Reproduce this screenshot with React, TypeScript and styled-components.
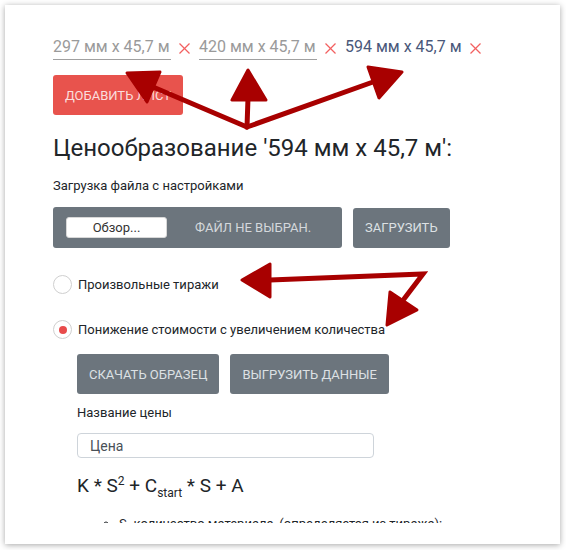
import React from 'react'
import styled, { createGlobalStyle } from 'styled-components'

const GlobalStyle = createGlobalStyle`
  html, body {
    margin: 0;
    padding: 0;
    background: #fff;
    font-family: Roboto, "Liberation Sans", Arial, sans-serif;
  }
  * { box-sizing: border-box; }
`

const sheets = [
  { label: '297 мм x 45,7 м', active: false },
  { label: '420 мм x 45,7 м', active: false },
  { label: '594 мм x 45,7 м', active: true },
]

const App = () => {
  return (
    <Page>
      <GlobalStyle />
      <Card>
        <Content>
          <SheetRow>
            {sheets.map((s) => (
              <React.Fragment key={s.label}>
                <SheetField $active={s.active}>{s.label}</SheetField>
                <RemoveMark viewBox="0 0 11 11">
                  <line x1="0.5" y1="0.5" x2="10.5" y2="10.5" />
                  <line x1="10.5" y1="0.5" x2="0.5" y2="10.5" />
                </RemoveMark>
              </React.Fragment>
            ))}
          </SheetRow>
          <AddButton>Добавить лист</AddButton>

          <Heading>Ценообразование '594 мм x 45,7 м':</Heading>

          <Label>Загрузка файла с настройками</Label>
          <UploadRow>
            <FilePicker>
              <BrowseButton>Обзор...</BrowseButton>
              <FileName>Файл не выбран.</FileName>
            </FilePicker>
            <GrayButton>Загрузить</GrayButton>
          </UploadRow>

          <RadioGroup>
            <RadioRow>
              <RadioCircle $checked={false} />
              <RadioLabel>Произвольные тиражи</RadioLabel>
            </RadioRow>
            <RadioRow>
              <RadioCircle $checked={true} />
              <RadioLabel>Понижение стоимости с увеличением количества</RadioLabel>
            </RadioRow>
          </RadioGroup>

          <Indented>
            <ButtonRow>
              <GrayButton>Скачать образец</GrayButton>
              <GrayButton>Выгрузить данные</GrayButton>
            </ButtonRow>
            <PriceLabel>Название цены</PriceLabel>
            <PriceInput defaultValue="Цена" />
            <Formula>
              K * S<sup>2</sup> + C<sub>start</sub> * S + A
            </Formula>
            <Notes>
              <li>S- количество материала, (определяется из тиража):</li>
            </Notes>
          </Indented>
        </Content>
      </Card>

      <Arrows viewBox="0 0 566 550">
        <g stroke="#a80000" strokeWidth="5" strokeLinecap="round" fill="none">
          <line x1="247" y1="127" x2="153" y2="87" />
          <line x1="247" y1="127" x2="248" y2="98" />
          <line x1="247" y1="127" x2="373" y2="82" />
          <polyline points="270,280 423,274 404,299" />
        </g>
        <g fill="#a80000" stroke="#a80000" strokeWidth="3" strokeLinejoin="round">
          <polygon points="127,73 160,72 147,102" />
          <polygon points="248,70 232,100 266,100" />
          <polygon points="368,67 402,72 379,98" />
          <polygon points="242,280 270,264 270,297" />
          <polygon points="390,292 417,310 387,325" />
        </g>
      </Arrows>
    </Page>
  )
}

export default App

const Page = styled.div`
  position: relative;
  width: 566px;
  height: 550px;
  padding: 5px 6px 6px 5px;
`
const Card = styled.div`
  width: 555px;
  height: 539px;
  background: #fff;
  box-shadow: 0 1px 6px rgba(0, 0, 0, 0.35);
  display: flex;
  flex-direction: column;
  padding-bottom: 21px;
`
const Content = styled.div`
  flex: 1;
  overflow: hidden;
  padding: 31px 0 0 48px;
  color: #212529;
`
const SheetRow = styled.div`
  display: flex;
  align-items: center;
`
const SheetField = styled.div<{ $active: boolean }>`
  width: ${(p) => (p.$active ? 'auto' : '118px')};
  font-size: 16px;
  line-height: 22px;
  padding-bottom: 1px;
  color: ${(p) => (p.$active ? '#4a587a' : '#9a9a9a')};
  border-bottom: 1px solid ${(p) => (p.$active ? 'transparent' : '#a0a0a0')};
  white-space: nowrap;
`
const RemoveMark = styled.svg`
  width: 11px;
  height: 11px;
  margin: 0 9px 0 8px;
  stroke: #f26060;
  stroke-width: 1.2;
`
const AddButton = styled.button`
  display: block;
  margin-top: 15px;
  width: 130px;
  height: 40px;
  border: none;
  border-radius: 3px;
  background: #e8534d;
  color: rgba(255, 255, 255, 0.82);
  font-family: inherit;
  font-size: 13px;
  text-transform: uppercase;
`
const Heading = styled.h2`
  margin: 19px 0 0;
  font-size: 24px;
  font-weight: 400;
  line-height: 28px;
  color: #212529;
`
const Label = styled.div`
  margin-top: 15px;
  font-size: 13px;
  line-height: 18px;
`
const UploadRow = styled.div`
  margin-top: 12px;
  display: flex;
  gap: 11px;
  align-items: center;
`
const FilePicker = styled.div`
  width: 289px;
  height: 41px;
  background: #6c757d;
  border-radius: 3px;
  display: flex;
  align-items: center;
  padding-left: 13px;
`
const BrowseButton = styled.div`
  width: 101px;
  height: 21px;
  background: #fff;
  border: 1px solid #d8d8d8;
  border-radius: 3px;
  font-size: 13px;
  line-height: 19px;
  text-align: center;
  color: #333;
`
const FileName = styled.div`
  margin-left: 28px;
  font-size: 13px;
  text-transform: uppercase;
  color: #d4d8dc;
`
const GrayButton = styled.button`
  height: 40px;
  padding: 0 12px;
  border: none;
  border-radius: 3px;
  background: #6c757d;
  color: #dde1e4;
  font-family: inherit;
  font-size: 13px;
  text-transform: uppercase;
`
const RadioGroup = styled.div`
  margin-top: 27px;
  display: flex;
  flex-direction: column;
  gap: 26px;
`
const RadioRow = styled.label`
  display: flex;
  align-items: center;
  gap: 6px;
`
const RadioCircle = styled.span<{ $checked: boolean }>`
  width: 19px;
  height: 19px;
  border-radius: 50%;
  border: 1px solid #cfcfcf;
  background: #fff;
  display: flex;
  align-items: center;
  justify-content: center;
  &::after {
    content: '';
    display: ${(p) => (p.$checked ? 'block' : 'none')};
    width: 8px;
    height: 8px;
    border-radius: 50%;
    background: #e84b4b;
  }
`
const RadioLabel = styled.span`
  font-size: 13px;
  line-height: 18px;
`
const Indented = styled.div`
  margin-top: 15px;
  padding-left: 24px;
`
const ButtonRow = styled.div`
  display: flex;
  gap: 11px;
`
const PriceLabel = styled.div`
  margin-top: 10px;
  font-size: 13px;
  line-height: 18px;
`
const PriceInput = styled.input`
  display: block;
  margin-top: 11px;
  width: 297px;
  height: 25px;
  padding: 0 12px;
  border: 1px solid #ced4da;
  border-radius: 4px;
  font-family: inherit;
  font-size: 14px;
  color: #495057;
  outline: none;
`
const Formula = styled.div`
  margin-top: 16px;
  font-size: 19px;
  line-height: 23px;
  sup, sub {
    font-size: 12px;
    line-height: 0;
  }
`
const Notes = styled.ul`
  margin: 18px 0 0;
  padding-left: 42px;
  list-style: circle;
  font-size: 13px;
  line-height: 18px;
`
const Arrows = styled.svg`
  position: absolute;
  left: 0;
  top: 0;
  width: 566px;
  height: 550px;
  pointer-events: none;
`
